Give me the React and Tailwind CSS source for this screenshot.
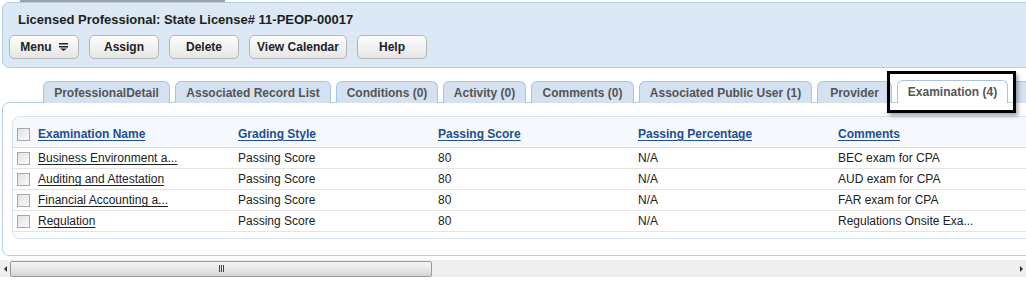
import React from "react";

const tabs = [
  { label: "ProfessionalDetail", w: 127 },
  { label: "Associated Record List", w: 156 },
  { label: "Conditions (0)", w: 102 },
  { label: "Activity (0)", w: 83 },
  { label: "Comments (0)", w: 103 },
  { label: "Associated Public User (1)", w: 173 },
  { label: "Provider", w: 75 },
];

const rows = [
  ["Business Environment a...", "Passing Score", "80", "N/A", "BEC exam for CPA"],
  ["Auditing and Attestation", "Passing Score", "80", "N/A", "AUD exam for CPA"],
  ["Financial Accounting a...", "Passing Score", "80", "N/A", "FAR exam for CPA"],
  ["Regulation", "Passing Score", "80", "N/A", "Regulations Onsite Exa..."],
];

function Btn({ children, w }) {
  return (
    <div
      className="h-[24px] shrink-0 rounded-[5px] border border-[#b4b4b4] bg-gradient-to-b from-[#fdfdfd] to-[#e6e6e6] flex items-center justify-center text-[12px] font-bold text-[#222] shadow-[inset_0_1px_0_#fff]"
      style={{ width: w }}
    >
      {children}
    </div>
  );
}

function Check() {
  return <div className="w-[13px] h-[13px] border border-[#a8a8a8] bg-gradient-to-br from-[#e2e2e2] to-[#fafafa]" />;
}

export default function App() {
  return (
    <div className="w-[1026px] h-[281px] bg-white overflow-hidden relative" style={{ fontFamily: '"Liberation Sans", Arial, sans-serif' }}>
      <div className="h-[2px] w-[205px] ml-[20px] bg-[#a0a0a0]" />
      <div className="ml-[2px] w-[1040px] h-[66px] bg-[#dce8f5] border border-[#b6cde6] rounded-l-[7px] pl-[15px] pt-[9px]">
        <div className="text-[13px] font-bold text-[#1e1e1e] leading-[16px]">Licensed Professional: State License# 11-PEOP-00017</div>
        <div className="flex gap-[10px] mt-[7px] -ml-[9px]">
          <Btn w={70}>
            <span>Menu</span>
            <svg width="9" height="8" viewBox="0 0 9 8" className="ml-[7px]">
              <rect x="0" y="0" width="9" height="1.5" fill="#222" />
              <rect x="0" y="3" width="9" height="1.5" fill="#222" />
              <path d="M1 5.5 L8 5.5 L4.5 8 Z" fill="#222" />
            </svg>
          </Btn>
          <Btn w={70}>Assign</Btn>
          <Btn w={70}>Delete</Btn>
          <Btn w={98}>View Calendar</Btn>
          <Btn w={70}>Help</Btn>
        </div>
      </div>

      <div className="relative mt-[12px] h-[23px] flex items-end pl-[43px] gap-[5px] overflow-visible">
        {tabs.map((t) => (
          <div
            key={t.label}
            className="h-[22px] shrink-0 rounded-t-[6px] border border-b-0 border-[#a9c4e2] bg-[#d4e1f0] flex items-center justify-center text-[12px] font-bold text-[#555]"
            style={{ width: t.w }}
          >
            {t.label}
          </div>
        ))}
        <div className="relative shrink-0 h-[23px] w-[111px] rounded-t-[6px] border border-b-0 border-[#a9c4e2] bg-white flex items-center justify-center text-[12px] font-bold text-[#555] z-10">
          Examination (4)
          <div className="absolute left-[-11px] top-[-10px] w-[129px] h-[42px] border-[3px] border-black shadow-[2px_3px_4px_rgba(0,0,0,0.35)]" />
        </div>
        <div className="h-[22px] shrink-0 w-[40px] rounded-t-[6px] border border-b-0 border-[#a9c4e2] bg-[#d4e1f0]" />
      </div>

      <div className="ml-[2px] w-[1040px] h-[154px] border border-[#b6cde6] rounded-l-[7px] bg-white pl-[9px] pt-[13px] -mt-[1px]">
        <div className="h-[123px] border border-r-0 border-[#d6e4f3] rounded-l-[8px] bg-white overflow-hidden">
          <div className="h-[31px] bg-[#f5f9fd] border-b border-[#cfdff0] flex items-center pt-[4px]">
            <div className="w-[25px] pl-[4px]"><Check /></div>
            {["Examination Name", "Grading Style", "Passing Score", "Passing Percentage", "Comments"].map((h) => (
              <div key={h} className="w-[200px] text-[12px] font-bold text-[#1d4f8f] underline underline-offset-[2px]">{h}</div>
            ))}
          </div>
          {rows.map((r, i) => (
            <div key={i} className="h-[21px] border-b border-[#e4e4e4] flex items-center">
              <div className="w-[25px] pl-[4px]"><Check /></div>
              <div className="w-[200px] text-[12px] text-[#222] underline underline-offset-[2px]">{r[0]}</div>
              <div className="w-[200px] text-[12px] text-[#222]">{r[1]}</div>
              <div className="w-[200px] text-[12px] text-[#222]">{r[2]}</div>
              <div className="w-[200px] text-[12px] text-[#222]">{r[3]}</div>
              <div className="w-[200px] text-[12px] text-[#222]">{r[4]}</div>
            </div>
          ))}
        </div>
      </div>

      <div className="mt-[4px] h-[17px] bg-[#efefef] flex items-center relative">
        <svg width="3" height="6" viewBox="0 0 3 6" className="ml-[4px]"><path d="M3 0 L0 3 L3 6 Z" fill="#333" /></svg>
        <div className="ml-[3px] w-[422px] h-[16px] rounded-[2px] border border-[#999] bg-gradient-to-b from-[#f4f4f4] via-[#e8e8e8] to-[#d4d4d4] flex items-center justify-center">
          <div className="flex gap-[1px]">
            <div className="w-[1px] h-[7px] bg-[#444]" />
            <div className="w-[1px] h-[7px] bg-[#444]" />
            <div className="w-[1px] h-[7px] bg-[#444]" />
          </div>
        </div>
        <svg width="3" height="6" viewBox="0 0 3 6" className="absolute right-[3px]"><path d="M0 0 L3 3 L0 6 Z" fill="#333" /></svg>
      </div>
    </div>
  );
}
